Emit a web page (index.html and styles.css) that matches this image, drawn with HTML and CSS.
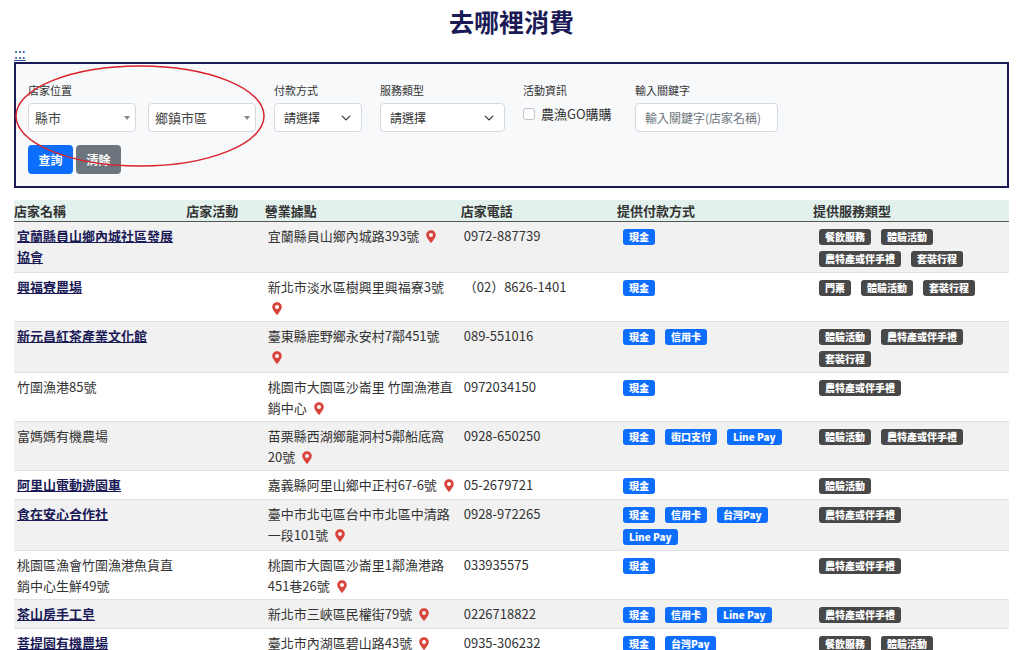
FILE: index.html
```
<!DOCTYPE html>
<html lang="zh-Hant">
<head>
    <meta charset="UTF-8">
    <meta name="viewport" content="width=device-width, initial-scale=1.0">
    <title>去哪裡消費</title>
    <link rel="stylesheet" href="styles.css">
</head>
<body>

    <!-- Shared map pin -->
    <svg class="sprite" aria-hidden="true">
        <symbol id="pin" viewBox="0 0 10 13">
            <path fill-rule="evenodd" d="M5 0.2C2.2 0.2 0.2 2.3 0.2 5c0 2.6 2.6 5.1 4.2 7.6 0.3 0.4 0.9 0.4 1.2 0C7.2 10.1 9.8 7.6 9.8 5 9.8 2.3 7.8 0.2 5 0.2zM5 2.9a2 2 0 1 1 0 4 2 2 0 0 1 0-4z"/>
        </symbol>
    </svg>

    <main class="page">
        <h1>去哪裡消費</h1>
        <div class="anchor"><a href="#content">:::</a></div>

        <!-- Search form -->
        <form class="search-box" id="content">
            <div class="fields">
                <div class="field">
                    <label for="city">店家位置</label>
                    <div class="pair">
                        <select id="city" class="control place"><option>縣市</option></select>
                        <select id="town" class="control place" aria-label="鄉鎮市區"><option>鄉鎮市區</option></select>
                    </div>
                </div>
                <div class="field">
                    <label for="payment">付款方式</label>
                    <select id="payment" class="control choose payment"><option>請選擇</option></select>
                </div>
                <div class="field">
                    <label for="service">服務類型</label>
                    <select id="service" class="control choose service"><option>請選擇</option></select>
                </div>
                <div class="field activity">
                    <span class="field-title">活動資訊</span>
                    <div class="check">
                        <input type="checkbox" id="gogo">
                        <label for="gogo">農漁GO購購</label>
                    </div>
                </div>
                <div class="field">
                    <label for="keyword">輸入關鍵字</label>
                    <input type="text" id="keyword" class="control keyword" placeholder="輸入關鍵字(店家名稱)">
                </div>
            </div>
            <div class="buttons">
                <button type="submit" class="btn primary">查詢</button>
                <button type="reset" class="btn secondary">清除</button>
            </div>
            <svg class="highlight" viewBox="0 0 250 102" aria-hidden="true"><ellipse cx="124" cy="51" rx="124" ry="50"/></svg>
        </form>

        <!-- Store list -->
        <table class="stores">
            <colgroup>
                <col class="col-name"><col class="col-event"><col class="col-address"><col class="col-phone"><col class="col-pay"><col class="col-type">
            </colgroup>
            <thead>
                <tr><th>店家名稱</th><th>店家活動</th><th>營業據點</th><th>店家電話</th><th>提供付款方式</th><th>提供服務類型</th></tr>
            </thead>
            <tbody>
                <tr>
                    <td><a href="#">宜蘭縣員山鄉內城社區發展協會</a></td>
                    <td></td>
                    <td>宜蘭縣員山鄉內城路393號 <svg class="pin"><use href="#pin"/></svg></td>
                    <td>0972-887739</td>
                    <td><div class="badges pay"><span>現金</span></div></td>
                    <td><div class="badges"><span>餐飲服務</span><span>體驗活動</span><span>農特產或伴手禮</span><span>套裝行程</span></div></td>
                </tr>
                <tr>
                    <td><a href="#">興福寮農場</a></td>
                    <td></td>
                    <td>新北市淡水區樹興里興福寮3號 <svg class="pin"><use href="#pin"/></svg></td>
                    <td>（02）8626-1401</td>
                    <td><div class="badges pay"><span>現金</span></div></td>
                    <td><div class="badges"><span>門票</span><span>體驗活動</span><span>套裝行程</span></div></td>
                </tr>
                <tr>
                    <td><a href="#">新元昌紅茶產業文化館</a></td>
                    <td></td>
                    <td>臺東縣鹿野鄉永安村7鄰451號 <svg class="pin"><use href="#pin"/></svg></td>
                    <td>089-551016</td>
                    <td><div class="badges pay"><span>現金</span><span>信用卡</span></div></td>
                    <td><div class="badges"><span>體驗活動</span><span>農特產或伴手禮</span><span>套裝行程</span></div></td>
                </tr>
                <tr>
                    <td>竹圍漁港85號</td>
                    <td></td>
                    <td>桃園市大園區沙崙里 竹圍漁港直銷中心 <svg class="pin"><use href="#pin"/></svg></td>
                    <td>0972034150</td>
                    <td><div class="badges pay"><span>現金</span></div></td>
                    <td><div class="badges"><span>農特產或伴手禮</span></div></td>
                </tr>
                <tr>
                    <td>富媽媽有機農場</td>
                    <td></td>
                    <td>苗栗縣西湖鄉龍洞村5鄰船底窩20號 <svg class="pin"><use href="#pin"/></svg></td>
                    <td>0928-650250</td>
                    <td><div class="badges pay"><span>現金</span><span>街口支付</span><span>Line Pay</span></div></td>
                    <td><div class="badges"><span>體驗活動</span><span>農特產或伴手禮</span></div></td>
                </tr>
                <tr>
                    <td><a href="#">阿里山電動遊園車</a></td>
                    <td></td>
                    <td>嘉義縣阿里山鄉中正村67-6號 <svg class="pin"><use href="#pin"/></svg></td>
                    <td>05-2679721</td>
                    <td><div class="badges pay"><span>現金</span></div></td>
                    <td><div class="badges"><span>體驗活動</span></div></td>
                </tr>
                <tr>
                    <td><a href="#">食在安心合作社</a></td>
                    <td></td>
                    <td>臺中市北屯區台中市北區中清路一段101號 <svg class="pin"><use href="#pin"/></svg></td>
                    <td>0928-972265</td>
                    <td><div class="badges pay"><span>現金</span><span>信用卡</span><span>台灣Pay</span><span>Line Pay</span></div></td>
                    <td><div class="badges"><span>農特產或伴手禮</span></div></td>
                </tr>
                <tr>
                    <td>桃園區漁會竹圍漁港魚貨直銷中心生鮮49號</td>
                    <td></td>
                    <td>桃園市大園區沙崙里1鄰漁港路451巷26號 <svg class="pin"><use href="#pin"/></svg></td>
                    <td>033935575</td>
                    <td><div class="badges pay"><span>現金</span></div></td>
                    <td><div class="badges"><span>農特產或伴手禮</span></div></td>
                </tr>
                <tr>
                    <td><a href="#">茶山房手工皂</a></td>
                    <td></td>
                    <td>新北市三峽區民權街79號 <svg class="pin"><use href="#pin"/></svg></td>
                    <td>0226718822</td>
                    <td><div class="badges pay"><span>現金</span><span>信用卡</span><span>Line Pay</span></div></td>
                    <td><div class="badges"><span>農特產或伴手禮</span></div></td>
                </tr>
                <tr>
                    <td><a href="#">菩提園有機農場</a></td>
                    <td></td>
                    <td>臺北市內湖區碧山路43號 <svg class="pin"><use href="#pin"/></svg></td>
                    <td>0935-306232</td>
                    <td><div class="badges pay"><span>現金</span><span>台灣Pay</span></div></td>
                    <td><div class="badges"><span>餐飲服務</span><span>體驗活動</span></div></td>
                </tr>
            </tbody>
        </table>
    </main>

</body>
</html>
```
FILE: styles.css
```
* { box-sizing: border-box; }
body { margin: 0; background: #fff; color: #333; font-family: "Noto Sans CJK TC", sans-serif; font-size: 13px; line-height: 21px; }
.sprite { display: none; }
.page { padding: 0 15px 0 14px; }
h1 { margin: 0; font-size: 25px; line-height: 42px; text-align: center; color: #1a1a57; }
.anchor { padding-top: 2px; font-size: 14px; line-height: 18px; }
.anchor a { color: #2d4f9c; }

/* Search form */
.search-box { position: relative; padding: 18px 12px 12px; border: 2px solid #1a1a57; background: #f7f9fb; }
.fields { display: flex; flex-wrap: wrap; gap: 18px; }
.field label, .field-title { display: block; margin-bottom: 5px; font-size: 11px; line-height: 16px; }
.pair { display: flex; gap: 12px; }
.control {
    display: block;
    height: 29px;
    margin: 0;
    border: 1px solid #d5dae0;
    border-radius: 4px;
    background-color: #fff;
    color: #333;
    font-family: inherit;
    font-size: 12px;
}
select.control { appearance: none; background-repeat: no-repeat; }
.place {
    width: 108px;
    padding: 0 20px 0 6px;
    font-size: 13px;
    color: #444;
    background-image: url("data:image/svg+xml,%3Csvg xmlns='http://www.w3.org/2000/svg' viewBox='0 0 6 4'%3E%3Cpath fill='%23888' d='M0 0h6L3 4z'/%3E%3C/svg%3E");
    background-position: right 5px center;
    background-size: 6px 4px;
}
.choose {
    padding: 0 20px 0 9px;
    background-image: url("data:image/svg+xml,%3Csvg xmlns='http://www.w3.org/2000/svg' viewBox='0 0 16 16'%3E%3Cpath fill='none' stroke='%23343a40' stroke-linecap='round' stroke-linejoin='round' stroke-width='2' d='m2 5 6 6 6-6'/%3E%3C/svg%3E");
    background-position: right 10px center;
    background-size: 10px 10px;
}
.payment { width: 88px; }
.service { width: 125px; }
.activity { width: 94px; }
.check { display: flex; align-items: center; gap: 6px; height: 21px; }
.check input { appearance: none; flex: none; width: 12px; height: 12px; margin: 0; border: 1px solid #bfc4ca; border-radius: 3px; background: #fff; }
.check input:checked { background: #0d6efd; }
.check label { margin: 0; font-size: 13px; line-height: 21px; white-space: nowrap; }
.keyword { width: 143px; padding: 0 9px; }
.keyword::placeholder { color: #6c757d; opacity: 1; }
.buttons { display: flex; gap: 3px; margin-top: 13px; }
.btn { width: 45px; height: 29px; padding: 0; border: 0; border-radius: 4px; color: #fff; font-family: inherit; font-size: 12px; font-weight: 700; cursor: pointer; }
.primary { background: #0d6efd; }
.secondary { background: #6c757d; }

/* Ring drawn over the location fields */
.highlight { position: absolute; left: 0; top: 1px; width: 250px; height: 102px; overflow: visible; pointer-events: none; }
.highlight ellipse { fill: none; stroke: #d8232a; stroke-width: 1.5; }

/* Store list */
.stores { width: 100%; margin-top: 12px; border-collapse: separate; border-spacing: 0; table-layout: fixed; }
.col-name { width: 17.3%; }
.col-event { width: 7.9%; }
.col-address { width: 19.7%; }
.col-phone { width: 15.7%; }
.col-pay { width: 19.7%; }
.col-type { width: 19.7%; }
.stores th { padding: 0; border-bottom: 1px solid #555; background: #e2f1ec; text-align: left; font-weight: 700; }
.stores td { padding: 3px; border-bottom: 1px solid #e0e2e4; vertical-align: top; }
.stores tbody tr:nth-child(odd) { background: #f1f1f1; }
.stores a { color: #1a1a57; font-weight: 700; text-decoration: underline; }
.pin { width: 10px; height: 13px; margin: 0 3px 0 4px; vertical-align: -2px; fill: #d9453d; }
.badges { display: flex; flex-wrap: wrap; gap: 6px 10px; padding: 4px 0 2px 3px; }
.badges span { padding: 0 6px; border-radius: 3px; background: #484848; color: #fff; font-size: 10px; font-weight: 900; line-height: 16px; white-space: nowrap; }
.pay span { background: #0d6efd; }
```
